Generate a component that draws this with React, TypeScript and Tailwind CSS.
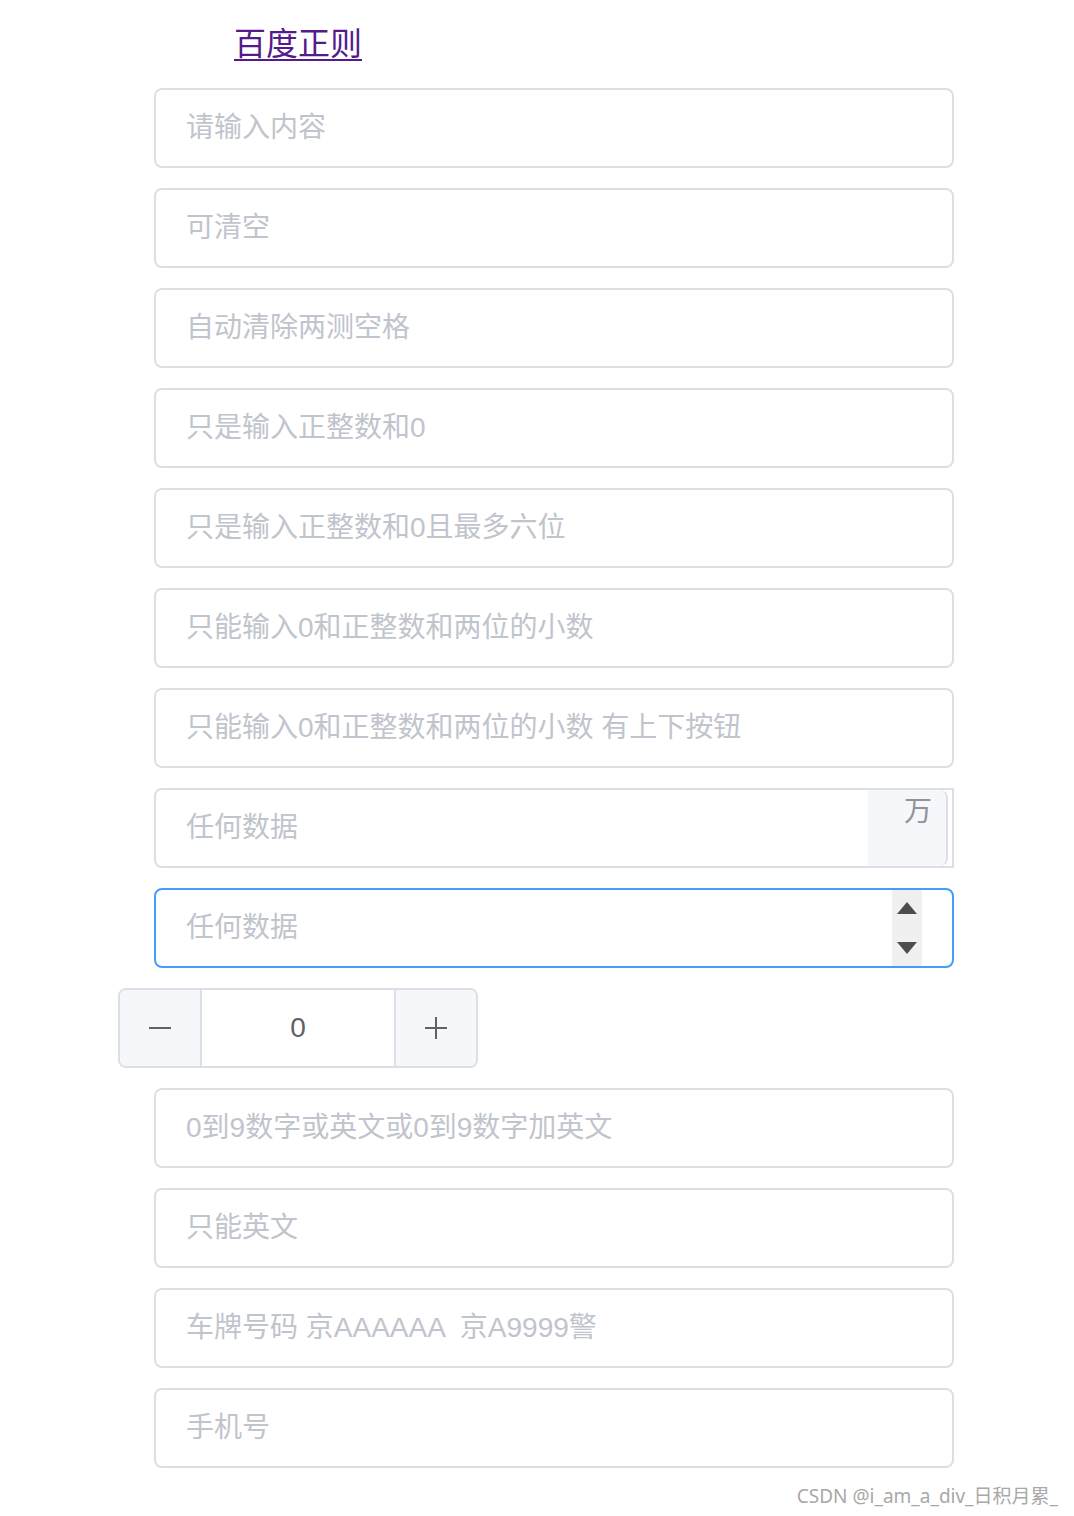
import React from 'react';

const FONT = "font-['Liberation_Sans','Noto_Sans_CJK_SC',sans-serif]";

const PLAIN_TOP = [
  '请输入内容',
  '可清空',
  '自动清除两测空格',
  '只是输入正整数和0',
  '只是输入正整数和0且最多六位',
  '只能输入0和正整数和两位的小数',
  '只能输入0和正整数和两位的小数 有上下按钮',
];

const PLAIN_BOTTOM = ['0到9数字或英文或0到9数字加英文', '只能英文', '车牌号码 京AAAAAA  京A9999警', '手机号'];

function TextInput({ placeholder }: { placeholder: string }) {
  return (
    <input
      type="text"
      placeholder={placeholder}
      className="block w-[800px] h-[80px] ml-[154px] px-[30px] border-2 border-[#dcdfe6] rounded-[8px] bg-white text-[28px] text-[#606266] placeholder:text-[#c0c4cc] outline-none"
    />
  );
}

export default function App() {
  return (
    <div className={`w-[1074px] min-h-[1516px] bg-white ${FONT}`}>
      {/* title link */}
      <div className="pt-[20px] h-[88px] pl-[234px]">
        <a href="#" className="text-[32px] leading-[48px] text-[#551a8b] underline decoration-2 underline-offset-[4px]">
          百度正则
        </a>
      </div>

      <div className="flex flex-col gap-[20px]">
        {PLAIN_TOP.map((p) => (
          <TextInput key={p} placeholder={p} />
        ))}

        {/* input with append */}
        <div className="ml-[154px] w-[800px] h-[80px] flex border-y-2 border-l-2 border-r-2 border-[#dcdfe6] rounded-l-[8px] bg-white">
          <input
            type="text"
            placeholder="任何数据"
            className="flex-1 min-w-0 h-full pl-[30px] text-[28px] text-[#606266] placeholder:text-[#c0c4cc] outline-none bg-transparent rounded-l-[8px]"
          />
          <div className="w-[80px] h-full bg-[#f5f7fa] border-r-2 border-[#dcdfe6] rounded-r-[8px] flex justify-end pr-[14px] pt-[4px] mr-[4px]">
            <span className="text-[28px] leading-[36px] text-[#909399]">万</span>
          </div>
        </div>

        {/* focused number input with spinner */}
        <div className="ml-[154px] w-[800px] h-[80px] flex items-stretch border-2 border-[#409eff] rounded-[8px] bg-white">
          <input
            type="text"
            placeholder="任何数据"
            className="flex-1 min-w-0 h-full pl-[30px] text-[28px] text-[#606266] placeholder:text-[#c0c4cc] outline-none bg-transparent rounded-l-[8px]"
          />
          <div className="w-[30px] mr-[30px] bg-[#f0f0f0] flex flex-col items-center justify-between py-[12px]">
            <svg width="20" height="12" viewBox="0 0 20 12">
              <polygon points="10,0 20,12 0,12" fill="#4d4d4d" />
            </svg>
            <svg width="20" height="12" viewBox="0 0 20 12">
              <polygon points="0,0 20,0 10,12" fill="#4d4d4d" />
            </svg>
          </div>
        </div>

        {/* input-number */}
        <div className="ml-[118px] w-[360px] h-[80px] flex border-2 border-[#dcdfe6] rounded-[8px] overflow-hidden bg-white">
          <div className="w-[82px] h-full bg-[#f5f7fa] border-r-2 border-[#dcdfe6] flex items-center justify-center">
            <svg width="24" height="24" viewBox="0 0 24 24">
              <line x1="1" y1="12" x2="23" y2="12" stroke="#606266" strokeWidth="2" />
            </svg>
          </div>
          <div className="flex-1 flex items-center justify-center text-[28px] text-[#606266]">0</div>
          <div className="w-[82px] h-full bg-[#f5f7fa] border-l-2 border-[#dcdfe6] flex items-center justify-center">
            <svg width="24" height="24" viewBox="0 0 24 24">
              <line x1="1" y1="12" x2="23" y2="12" stroke="#606266" strokeWidth="2" />
              <line x1="12" y1="1" x2="12" y2="23" stroke="#606266" strokeWidth="2" />
            </svg>
          </div>
        </div>

        {PLAIN_BOTTOM.map((p) => (
          <TextInput key={p} placeholder={p} />
        ))}
      </div>

      {/* watermark */}
      <div className="flex justify-end pr-[16px] pt-[14px]">
        <span className="text-[19px] leading-[28px] text-[#a8a8a8] font-['Noto_Sans','Noto_Sans_CJK_SC',sans-serif] [text-shadow:0_0_2px_#fff]">
          CSDN @i_am_a_div_日积月累_
        </span>
      </div>
    </div>
  );
}
